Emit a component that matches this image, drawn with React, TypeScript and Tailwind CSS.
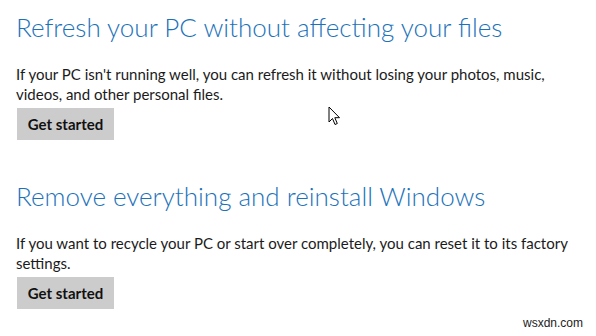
const sections = [
  {
    title: "Refresh your PC without affecting your files",
    body: "If your PC isn't running well, you can refresh it without losing your photos, music, videos, and other personal files.",
  },
  {
    title: "Remove everything and reinstall Windows",
    body: "If you want to recycle your PC or start over completely, you can reset it to its factory settings.",
  },
];

const Cursor = () => (
  <svg
    className="absolute left-[328px] top-[106px]"
    width="14"
    height="21"
    viewBox="0 0 14 21"
  >
    <path
      d="M1 1 L1 16 L4.5 12.5 L7 18.5 L9.3 17.5 L6.8 11.7 L11.5 11.7 Z"
      fill="#fff"
      stroke="#000"
      strokeWidth="1"
      strokeLinejoin="miter"
    />
  </svg>
);

export default function App() {
  return (
    <div className="relative w-[596px] h-[336px] overflow-hidden bg-white font-['Lato',sans-serif]">
      <div className="flex flex-col pl-4 pt-[9px]">
        {sections.map((s, i) => (
          <section key={i} className="flex flex-col mb-[38px]">
            <h2 className="text-[26px] leading-[36px] font-light text-[#1c72ba] whitespace-nowrap">
              {s.title}
            </h2>
            <p className="mt-[19px] w-[562px] text-[15px] leading-[20px] text-[#1b1b1b]">
              {s.body}
            </p>
            <div className="mt-[4px]">
              <button className="h-8 w-[97px] ml-px bg-[#cccccc] text-[15px] font-bold text-[#111]">
                Get started
              </button>
            </div>
          </section>
        ))}
      </div>
      <Cursor />
      <span className="absolute right-[13px] bottom-[4px] text-[12px] text-[#222] font-['Liberation_Sans',sans-serif]">
        wsxdn.com
      </span>
    </div>
  );
}
